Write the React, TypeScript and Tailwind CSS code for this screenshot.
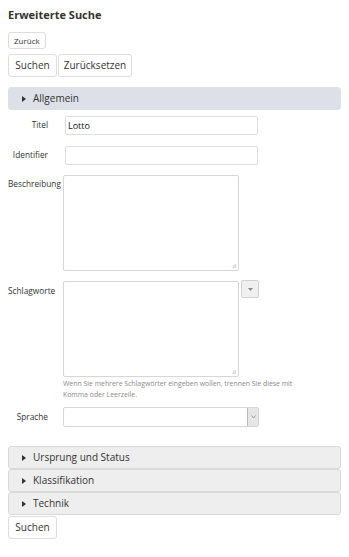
import React from "react";

const Tri = () => (
  <svg width="4" height="6" viewBox="0 0 4 6" className="shrink-0">
    <path d="M0 0 L4 3 L0 6 Z" fill="#333" />
  </svg>
);

function Panel({ title, active }: { title: string; active?: boolean }) {
  return (
    <div
      className={
        "h-[23px] flex items-center gap-[7px] pl-[13px] rounded-[3px] border text-[10px] text-[#333] " +
        (active ? "bg-[#dde1e7] border-[#dde1e7]" : "bg-[#eeeeee] border-[#d9d9d9]")
      }
    >
      <Tri />
      <span>{title}</span>
    </div>
  );
}

export default function App() {
  return (
    <div
      className="w-[349px] h-[557px] bg-white px-[8px] pt-[6px] text-[#333]"
      style={{ fontFamily: '"Open Sans", sans-serif' }}
    >
      <div className="text-[11px] font-bold leading-[18px] h-[18px]">Erweiterte Suche</div>
      <div className="mt-[8px] flex">
        <div className="h-[17px] px-[5px] flex items-center border border-[#dddddd] rounded-[3px] text-[8px]">
          Zurück
        </div>
      </div>
      <div className="mt-[5px] flex gap-[1px]">
        <div className="h-[23px] w-[49px] flex items-center justify-center border border-[#dddddd] rounded-[3px] text-[10px]">
          Suchen
        </div>
        <div className="h-[23px] w-[74px] flex items-center justify-center border border-[#dddddd] rounded-[3px] text-[10px]">
          Zurücksetzen
        </div>
      </div>
      <div className="mt-[10px]">
        <Panel title="Allgemein" active />
      </div>

      <div className="mt-[6px] flex items-center">
        <div className="w-[40px] text-right text-[8.3px] whitespace-nowrap">Titel</div>
        <div className="ml-[17px] w-[193px] h-[19px] border border-[#dddddd] rounded-[2px] flex items-center pl-[2px] text-[9px] text-[#111]">
          Lotto
        </div>
      </div>

      <div className="mt-[11px] flex items-center">
        <div className="w-[40px] text-right text-[8.3px] whitespace-nowrap">Identifier</div>
        <div className="ml-[17px] w-[193px] h-[19px] border border-[#dddddd] rounded-[2px]"></div>
      </div>

      <div className="mt-[10px] flex items-start">
        <div className="w-[40px] text-[8.3px] whitespace-nowrap leading-[12px] mt-[3px]">Beschreibung</div>
        <div className="ml-[15px] w-[176px] h-[96px] border border-[#d6d6d6] rounded-[2px] relative">
          <span className="absolute right-[2px] bottom-[1px] text-[6px] leading-[6px] text-[#999]">.ıl</span>
        </div>
      </div>

      <div className="mt-[10px] flex items-start">
        <div className="w-[40px] text-[8.3px] whitespace-nowrap leading-[12px] mt-[4px]">Schlagworte</div>
        <div className="ml-[15px]">
          <div className="flex items-start">
            <div className="w-[176px] h-[96px] border border-[#d6d6d6] rounded-[2px] relative">
              <span className="absolute right-[2px] bottom-[1px] text-[6px] leading-[6px] text-[#999]">.ıl</span>
            </div>
            <div className="ml-[2px] -mt-[1px] w-[18px] h-[18px] border border-[#d0d0d0] rounded-[2px] bg-[#f0f0f0] flex items-center justify-center">
              <svg width="5" height="3" viewBox="0 0 5 3">
                <path d="M0 0 L5 0 L2.5 3 Z" fill="#888" />
              </svg>
            </div>
          </div>
          <div className="mt-[1px] w-[250px] text-[6.9px] leading-[11px] text-[#8a8a8a]">
            Wenn Sie mehrere Schlagwörter eingeben wollen, trennen Sie diese mit Komma oder Leerzeile.
          </div>
        </div>
      </div>

      <div className="mt-[7px] flex items-center">
        <div className="w-[40px] text-right text-[8.3px] whitespace-nowrap">Sprache</div>
        <div className="ml-[15px] w-[196px] h-[20px] border border-[#d6d6d6] rounded-[2px] flex justify-end">
          <div className="w-[11px] h-full bg-[#e6e6e6] border-l border-[#bbbbbb] flex items-center justify-center">
            <svg width="5" height="4" viewBox="0 0 5 4">
              <path d="M0.5 0.5 L2.5 3 L4.5 0.5" fill="none" stroke="#888" strokeWidth="0.8" />
            </svg>
          </div>
        </div>
      </div>

      <div className="mt-[19px] flex flex-col">
        <Panel title="Ursprung und Status" />
        <Panel title="Klassifikation" />
        <Panel title="Technik" />
      </div>
      <div className="mt-[1px] flex">
        <div className="h-[23px] w-[49px] flex items-center justify-center border border-[#dddddd] rounded-[3px] text-[10px]">
          Suchen
        </div>
      </div>
    </div>
  );
}
